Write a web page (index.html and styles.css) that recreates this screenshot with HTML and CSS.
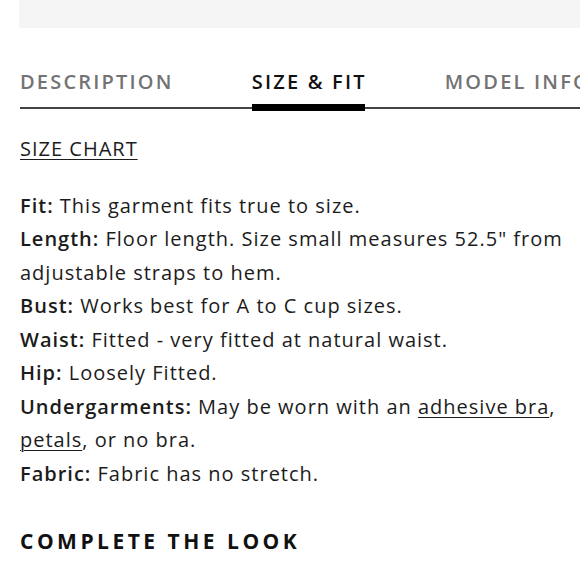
FILE: index.html
```html
<!DOCTYPE html>
<html lang="en">
<head>
<meta charset="utf-8">
<title>Size &amp; Fit</title>
<link rel="stylesheet" href="styles.css">
</head>
<body>
<div class="page">
  <div class="topbar"></div>
  <nav class="tabs">
    <a class="tab">DESCRIPTION</a>
    <a class="tab active">SIZE &amp; FIT</a>
    <a class="tab">MODEL INFO</a>
  </nav>
  <section class="content">
    <p class="chart"><a class="link">SIZE CHART</a></p>
    <ul class="specs">
      <li><b>Fit:</b> This garment fits true to size.</li>
      <li><b>Length:</b> Floor length. Size small measures 52.5" from adjustable straps to hem.</li>
      <li><b>Bust:</b> Works best for A to C cup sizes.</li>
      <li><b>Waist:</b> Fitted - very fitted at natural waist.</li>
      <li><b>Hip:</b> Loosely Fitted.</li>
      <li><b>Undergarments:</b> May be worn with an <a class="link">adhesive bra</a>, <a class="link">petals</a>, or no bra.</li>
      <li><b>Fabric:</b> Fabric has no stretch.</li>
    </ul>
    <h2 class="look">COMPLETE THE LOOK</h2>
  </section>
</div>
</body>
</html>
```
FILE: styles.css
```css
html, body {
  margin: 0;
  padding: 0;
  background: #fff;
}
body {
  width: 580px;
  height: 580px;
  overflow: hidden;
  font-family: "Open Sans", "Liberation Sans", sans-serif;
  color: #1c1c1c;
}
.page {
  padding-left: 20px;
}
.topbar {
  height: 28px;
  margin-left: -1px;
  background: #f5f5f5;
}
.tabs {
  display: flex;
  gap: 78px;
  margin-top: 42px;
  border-bottom: 2px solid #444;
  white-space: nowrap;
}
.tab {
  position: relative;
  padding-bottom: 13px;
  font-size: 20px;
  line-height: 24px;
  font-weight: 600;
  letter-spacing: 2.2px;
  color: #737373;
}
.tab.active {
  color: #111;
}
.tab.active::after {
  content: "";
  position: absolute;
  left: 0;
  right: 2px;
  bottom: -4px;
  height: 7px;
  background: #000;
}
.content {
  font-size: 20px;
  line-height: 33.5px;
  letter-spacing: 1px;
}
.chart {
  margin: 23px 0 0;
}
.link {
  text-decoration: underline;
  text-underline-offset: 3px;
  text-decoration-thickness: 1px;
}
.specs {
  list-style: none;
  margin: 23px 0 0;
  padding: 0;
  padding-right: 14px;
}
.specs b {
  font-weight: 600;
}
.look {
  margin: 37px 0 0;
  font-size: 21px;
  line-height: 28px;
  font-weight: 700;
  letter-spacing: 3.5px;
  color: #111;
}
```
